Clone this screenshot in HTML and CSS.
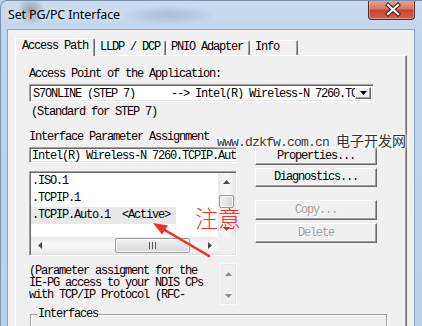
FILE: index.html
```html
<!DOCTYPE html>
<html>
  <head>
    <meta charset="utf-8">
    <title>Set PG/PC Interface</title>
    <link rel="stylesheet" href="styles.css">
  </head>
  <body>
    <div class="window">
      <div class="titlebar">
        <span class="title">Set PG/PC Interface</span>
        <div class="close">
          <svg width="47" height="19" viewBox="0 0 47 19">
            <path d="M19 5 L29 14 M29 5 L19 14" stroke="#3a1a16" stroke-width="4.2" stroke-linecap="square"/>
            <path d="M19 5 L29 14 M29 5 L19 14" stroke="#fff" stroke-width="2.2" stroke-linecap="square"/>
          </svg>
        </div>
      </div>
      <div class="client">
        <div class="tabs">
          <div class="tab active">Access Path</div>
          <div class="tab lldp">LLDP / DCP</div>
          <div class="tab pnio">PNIO Adapter</div>
          <div class="tab info">Info</div>
        </div>
        <div class="panel">
          <div class="caption access">Access Point of the Application:</div>
          <div class="combo">
            <span class="combo-text">S7ONLINE (STEP 7)      --&gt; Intel(R) Wireless-N 7260.TC</span>
            <span class="drop">
              <svg width="7" height="4" viewBox="0 0 7 4"><path d="M0 0 H7 L3.5 4 Z" fill="#000"/></svg>
            </span>
          </div>
          <div class="note">(Standard for STEP 7)</div>
          <div class="caption params">Interface Parameter Assignment</div>
          <div class="assign">
            <div class="assign-left">
              <div class="field">Intel(R) Wireless-N 7260.TCPIP.Aut</div>
              <div class="listbox">
                <div class="items">
                  <div class="item">.ISO.1</div>
                  <div class="item">.TCPIP.1</div>
                  <div class="item"><span class="selected">.TCPIP.Auto.1  &lt;Active&gt;</span></div>
                </div>
                <div class="vscroll">
                  <div class="sbtn">
                    <svg width="7" height="4" viewBox="0 0 7 4"><path d="M0 4 H7 L3.5 0 Z" fill="#4a4a4a"/></svg>
                  </div>
                  <div class="vtrack"><div class="thumb vthumb"></div></div>
                  <div class="sbtn">
                    <svg width="7" height="4" viewBox="0 0 7 4"><path d="M0 0 H7 L3.5 4 Z" fill="#4a4a4a"/></svg>
                  </div>
                </div>
                <div class="hscroll">
                  <div class="sbtn">
                    <svg width="4" height="7" viewBox="0 0 4 7"><path d="M4 0 V7 L0 3.5 Z" fill="#4a4a4a"/></svg>
                  </div>
                  <div class="htrack">
                    <div class="thumb hthumb">
                      <svg width="7" height="7" viewBox="0 0 7 7"><path d="M0.5 0 V7 M3.5 0 V7 M6.5 0 V7" stroke="#5a5a5a" stroke-width="1"/></svg>
                    </div>
                  </div>
                  <div class="sbtn">
                    <svg width="4" height="7" viewBox="0 0 4 7"><path d="M0 0 V7 L4 3.5 Z" fill="#4a4a4a"/></svg>
                  </div>
                </div>
                <div class="corner"></div>
              </div>
            </div>
            <div class="buttons">
              <div class="btn props">Properties...</div>
              <div class="btn diag">Diagnostics...</div>
              <div class="btn copy disabled">Copy...</div>
              <div class="btn delete disabled">Delete</div>
            </div>
          </div>
          <div class="desc">
            <div class="desc-text">(Parameter assigment for the<br>IE-PG access to your NDIS CPs<br>with TCP/IP Protocol (RFC-</div>
            <div class="desc-scroll">
              <svg width="7" height="4" viewBox="0 0 7 4"><path d="M0 4 H7 L3.5 0 Z" fill="#8a8a8a"/></svg>
              <svg width="7" height="4" viewBox="0 0 7 4"><path d="M0 0 H7 L3.5 4 Z" fill="#8a8a8a"/></svg>
            </div>
          </div>
          <fieldset class="group">
            <legend>Interfaces</legend>
          </fieldset>
        </div>
      </div>

      <div class="watermark">www.dzkfw.com.cn <span class="cn">电子开发网</span></div>
      <div class="remark">注意</div>
      <svg class="pointer" width="64" height="40" viewBox="0 0 64 40">
        <path d="M59 36 L14 9.5" stroke="#ee2f2a" stroke-width="2.6" stroke-linecap="round"/>
        <path d="M3 3 L18 5.5 L12 14.5 Z" fill="#ee2f2a"/>
      </svg>
    </div>
  </body>
</html>
```

FILE: styles.css
```css
* {
  box-sizing: border-box;
}

body {
  margin: 0;
  width: 422px;
  height: 326px;
  overflow: hidden;
  font-family: "Liberation Mono", monospace;
  font-size: 12px;
  line-height: 12px;
  letter-spacing: -1.2px;
  color: #000;
  background: #bcd4ee;
}

.window {
  position: relative;
  width: 422px;
  height: 326px;
  overflow: hidden;
  border-top: 1px solid #7d93ad;
  border-left: 1px solid #7d93ad;
  border-top-left-radius: 7px;
  background:
    radial-gradient(ellipse 14px 14px at 30px 10px, rgba(70, 60, 60, 0.45), rgba(70, 60, 60, 0)),
    radial-gradient(ellipse 48px 10px at 168px 14px, rgba(140, 165, 195, 0.55), rgba(140, 165, 195, 0)),
    linear-gradient(#cadcf0, #bdd5ee 40px, #b9d2ec);
}

/* title bar */
.titlebar {
  display: flex;
  height: 28px;
}

.title {
  padding: 7px 0 0 7px;
  font-family: "Noto Sans", "Open Sans", sans-serif;
  font-size: 12.5px;
  line-height: 13px;
  letter-spacing: -0.15px;
  color: #000;
  text-shadow: 0 0 6px rgba(255, 255, 255, 0.9);
}

.close {
  width: 47px;
  height: 20px;
  margin: -1px 7px 0 auto;
  border: 1px solid #5e2a24;
  border-top: none;
  border-radius: 0 0 4px 4px;
  background: linear-gradient(#e7a797, #d6786a 45%, #c4432f 55%, #d26652);
  box-shadow: inset 0 0 0 1px rgba(255, 200, 190, 0.45);
}

.close svg {
  display: block;
}

/* client area */
.client {
  width: 408px;
  height: 300px;
  margin-left: 6px;
  padding: 8px 0 0 7px;
  background: #f0f0f0;
  border: 1px solid #8ea3bb;
  border-bottom: none;
  overflow: hidden;
}

.tabs {
  display: flex;
  align-items: flex-end;
  height: 17px;
}

.tab {
  position: relative;
  height: 15px;
  margin-right: 1px;
  padding-left: 3px;
  border-top: 1px solid #fff;
  border-left: 1px solid #fff;
  border-right: 1px solid #696969;
  border-radius: 2px 2px 0 0;
  box-shadow: inset -1px 0 #a0a0a0;
  white-space: pre;
}

.tab.active {
  z-index: 1;
  width: 80px;
  height: 18px;
  margin-bottom: -1px;
  padding: 1px 0 0 6px;
  background: #f0f0f0;
}

.tab.lldp {
  width: 70px;
}

.tab.pnio {
  width: 83px;
}

.tab.info {
  width: 47px;
}

.panel {
  width: 392px;
  height: 280px;
  padding-left: 13px;
  border-top: 1px solid #fff;
  border-left: 1px solid #fff;
  border-right: 1px solid #696969;
  box-shadow: inset -1px 0 #a0a0a0;
}

.caption {
  white-space: pre;
}

.caption.access {
  margin-top: 12px;
}

.caption.params {
  margin-top: 13px;
}

.note {
  margin-top: 4px;
  padding-left: 2px;
}

/* sunken controls */
.combo,
.field,
.listbox {
  border: 1px solid;
  border-color: #a0a0a0 #fff #fff #a0a0a0;
  box-shadow: inset 1px 1px #696969, inset -1px -1px #e3e3e3;
  background: #fff;
}

.combo {
  display: flex;
  width: 345px;
  height: 18px;
  margin-top: 4px;
  padding: 2px;
}

.combo-text {
  flex: 1;
  padding-left: 1px;
  line-height: 14px;
  white-space: pre;
  overflow: hidden;
}

.drop {
  display: flex;
  align-items: center;
  justify-content: center;
  width: 16px;
  border: 1px solid;
  border-color: #fff #696969 #696969 #fff;
  box-shadow: inset -1px -1px #a0a0a0;
  background: #f0f0f0;
}

.drop svg,
.sbtn svg,
.desc-scroll svg {
  display: block;
}

.assign {
  display: flex;
  margin-top: 4px;
}

.assign-left {
  width: 208px;
}

.field {
  height: 16px;
  padding: 2px 0 0 2px;
  white-space: pre;
  overflow: hidden;
}

.listbox {
  display: grid;
  grid-template-columns: 187px 17px;
  grid-template-rows: 64px 17px;
  height: 85px;
  margin-top: 8px;
  padding: 1px;
}

.items {
  overflow: hidden;
}

.item {
  height: 17px;
  line-height: 17px;
  padding-left: 1px;
  white-space: pre;
}

.selected {
  display: inline-block;
  width: 145px;
  margin-left: -1px;
  padding-left: 1px;
  background: #e8e8e8;
}

/* scroll bars */
.vscroll {
  display: flex;
  flex-direction: column;
  background: linear-gradient(to right, #e9e9e9, #f7f7f7 40%, #f7f7f7 60%, #e9e9e9);
}

.hscroll {
  display: flex;
  background: linear-gradient(#e9e9e9, #f7f7f7 40%, #f7f7f7 60%, #e9e9e9);
}

.sbtn {
  display: flex;
  align-items: center;
  justify-content: center;
  width: 17px;
  height: 17px;
  flex: none;
}

.vtrack,
.htrack {
  flex: 1;
}

.thumb {
  border: 1px solid #9a9a9a;
  border-radius: 2px;
  box-shadow: inset 0 0 0 1px #fbfbfb;
}

.vthumb {
  height: 13px;
  margin: 5px 1px 0;
  background: linear-gradient(to right, #f2f2f2, #e4e4e4 50%, #d8d8d8);
}

.hthumb {
  display: flex;
  align-items: center;
  justify-content: center;
  width: 75px;
  height: 15px;
  margin: 1px 0 0 67px;
  background: linear-gradient(#f2f2f2, #e4e4e4 50%, #d8d8d8);
}

.hthumb svg {
  display: block;
}

.corner {
  background: #f0f0f0;
}

/* buttons */
.buttons {
  display: flex;
  flex-direction: column;
  width: 122px;
  margin-left: 18px;
}

.btn {
  height: 18px;
  border: 1px solid;
  border-color: #fff #696969 #696969 #fff;
  box-shadow: inset -1px -1px #a0a0a0;
  text-align: center;
  line-height: 16px;
  white-space: pre;
}

.btn.diag {
  margin-top: 3px;
  height: 19px;
}

.btn.copy {
  margin-top: 13px;
  height: 20px;
  line-height: 18px;
}

.btn.delete {
  margin-top: 3px;
  height: 20px;
  line-height: 18px;
}

.btn.disabled {
  color: #a0a0a0;
  text-shadow: 1px 1px 0 #fff;
}

/* description */
.desc {
  display: grid;
  grid-template-columns: 191px 17px;
  height: 42px;
  margin-top: 7px;
}

.desc-text {
  padding-top: 2px;
  white-space: pre;
}

.desc-scroll {
  display: flex;
  flex-direction: column;
  align-items: center;
  justify-content: space-between;
  padding: 8px 0 6px;
  border: 1px solid #f8f8f8;
  box-shadow: inset 0 0 0 1px #e9e9e9;
}

.group {
  width: 357px;
  height: 40px;
  margin: 3px 0 0 1px;
  padding: 0;
  border: 1px solid #a0a0a0;
  box-shadow: inset 1px 1px #fff, 1px 1px #fff;
}

.group legend {
  margin-left: 6px;
  padding: 0 1px;
  line-height: 12px;
}

/* annotations drawn on top of the screenshot */
.watermark {
  position: absolute;
  left: 216px;
  top: 132px;
  font-size: 13px;
  line-height: 14px;
  letter-spacing: -0.8px;
  color: #333;
  white-space: pre;
  text-shadow: 0 0 2px #fff, 0 0 3px #fff, 0 0 5px #fff, 0 0 7px #fff;
}

.watermark .cn {
  font-family: "Noto Sans CJK SC", sans-serif;
  font-size: 14px;
  letter-spacing: 0;
}

.remark {
  position: absolute;
  left: 194px;
  top: 203px;
  font-family: "Noto Sans CJK SC", sans-serif;
  font-size: 23px;
  font-weight: 300;
  line-height: 26px;
  letter-spacing: 0;
  color: #ff2b2b;
}

.pointer {
  position: absolute;
  left: 149px;
  top: 219px;
}
```
